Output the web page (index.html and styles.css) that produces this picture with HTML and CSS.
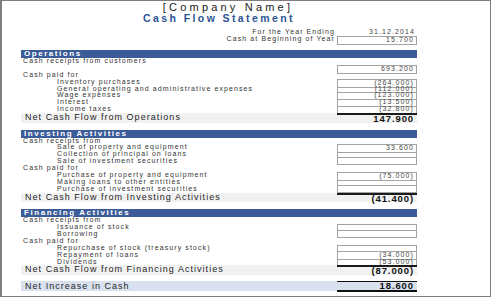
FILE: index.html
```html
<!DOCTYPE html>
<html>
<head>
<meta charset="utf-8">
<link rel="stylesheet" href="styles.css">
</head>
<body>
<div class="frame">
  <div class="sheet">
    <div class="company">[Company Name]</div>
    <div class="title">Cash Flow Statement</div>

    <div class="meta">
      <div class="row"><div class="label right">For the Year Ending</div><div class="val">31.12.2014</div></div>
      <div class="row"><div class="label right">Cash at Beginning of Year</div><div class="val box top">15.700</div></div>
    </div>

    <section class="section">
      <div class="bar">Operations</div>
      <div class="row"><div class="label">Cash receipts from customers</div><div class="val"></div></div>
      <div class="row"><div class="label"></div><div class="val box top">693.200</div></div>
      <div class="row"><div class="label">Cash paid for</div><div class="val"></div></div>
      <div class="row"><div class="label ind">Inventory purchases</div><div class="val box top">(264.000)</div></div>
      <div class="row"><div class="label ind">General operating and administrative expenses</div><div class="val box">(112.000)</div></div>
      <div class="row"><div class="label ind">Wage expenses</div><div class="val box">(123.000)</div></div>
      <div class="row"><div class="label ind">Interest</div><div class="val box">(13.500)</div></div>
      <div class="row"><div class="label ind">Income taxes</div><div class="val box">(32.800)</div></div>
      <div class="net"><div class="net-label">Net Cash Flow from Operations</div><div class="net-val">147.900</div></div>
    </section>

    <section class="section">
      <div class="bar">Investing Activities</div>
      <div class="row"><div class="label">Cash receipts from</div><div class="val"></div></div>
      <div class="row"><div class="label ind">Sale of property and equipment</div><div class="val box top">33.600</div></div>
      <div class="row"><div class="label ind">Collection of principal on loans</div><div class="val box"></div></div>
      <div class="row"><div class="label ind">Sale of investment securities</div><div class="val box"></div></div>
      <div class="row"><div class="label">Cash paid for</div><div class="val"></div></div>
      <div class="row"><div class="label ind">Purchase of property and equipment</div><div class="val box top">(75.000)</div></div>
      <div class="row"><div class="label ind">Making loans to other entities</div><div class="val box"></div></div>
      <div class="row"><div class="label ind">Purchase of investment securities</div><div class="val box"></div></div>
      <div class="net"><div class="net-label">Net Cash Flow from Investing Activities</div><div class="net-val">(41.400)</div></div>
    </section>

    <section class="section">
      <div class="bar">Financing Activities</div>
      <div class="row"><div class="label">Cash receipts from</div><div class="val"></div></div>
      <div class="row"><div class="label ind">Issuance of stock</div><div class="val box top"></div></div>
      <div class="row"><div class="label ind">Borrowing</div><div class="val box"></div></div>
      <div class="row"><div class="label">Cash paid for</div><div class="val"></div></div>
      <div class="row"><div class="label ind">Repurchase of stock (treasury stock)</div><div class="val box top"></div></div>
      <div class="row"><div class="label ind">Repayment of loans</div><div class="val box">(34.000)</div></div>
      <div class="row"><div class="label ind">Dividends</div><div class="val box">(53.000)</div></div>
      <div class="net"><div class="net-label">Net Cash Flow from Financing Activities</div><div class="net-val">(87.000)</div></div>
    </section>

    <div class="net total"><div class="net-label">Net Increase in Cash</div><div class="net-val">18.600</div></div>
  </div>
</div>
</body>
</html>
```

FILE: styles.css
```css
* { box-sizing: border-box; }

html, body {
  margin: 0;
  padding: 0;
  background: #ffffff;
}

body {
  font-family: "Liberation Sans", Arial, sans-serif;
  color: #333333;
}

.frame {
  width: 491px;
  height: 297px;
  border: 1px solid #7f7f7f;
  border-left-width: 2px;
  padding-left: 19px;
  overflow: hidden;
}

.sheet {
  width: 396px;
}

.company {
  margin-top: 1px;
  font-size: 11px;
  line-height: 11px;
  letter-spacing: 3.2px;
  text-align: center;
  padding-left: 18px;
  color: #1a1a1a;
  white-space: nowrap;
}

.title {
  font-size: 10.5px;
  line-height: 10px;
  font-weight: bold;
  letter-spacing: 2.4px;
  text-align: center;
  color: #2d5393;
  white-space: nowrap;
}

.meta {
  margin-top: 6px;
}

.section {
  margin-top: 7.2px;
}

.section + .section {
  margin-top: 7px;
}

.row {
  display: grid;
  grid-template-columns: 1fr 80px;
  height: 6.9px;
  font-size: 7px;
  line-height: 6.9px;
  letter-spacing: 1.1px;
  white-space: nowrap;
}

.label {
  padding-left: 2px;
}

.label.ind {
  padding-left: 36px;
}

.label.right {
  text-align: right;
  padding-right: 2px;
}

.val {
  text-align: right;
  padding-right: 2px;
  color: #444;
}

.box {
  border-left: 1px solid #a3a3a3;
  border-right: 1px solid #a3a3a3;
  border-bottom: 1px solid #a3a3a3;
}

.box.top {
  border-top: 1px solid #a3a3a3;
}

.bar {
  height: 8px;
  line-height: 8.5px;
  background: #3b5c98;
  color: #ffffff;
  font-size: 8px;
  font-weight: bold;
  letter-spacing: 1.55px;
  padding-left: 3px;
  white-space: nowrap;
}

.net {
  display: grid;
  grid-template-columns: 1fr 80px;
  height: 9.5px;
  background: #f1f1f1;
  white-space: nowrap;
}

.net-label {
  font-size: 9px;
  line-height: 9.5px;
  letter-spacing: 1.03px;
  padding-left: 4px;
  color: #1f1f1f;
}

.net-val {
  border-top: 2px solid #1a1a1a;
  font-size: 9.5px;
  line-height: 8px;
  font-weight: bold;
  letter-spacing: 0.9px;
  text-align: right;
  padding-right: 3px;
  color: #111;
}

.total {
  margin-top: 6.5px;
  height: 10px;
  background: #d9e1ee;
}

.total .net-label {
  line-height: 10px;
}

.total .net-val {
  border-top: 1px solid #111;
  border-bottom: 2px solid #111;
  line-height: 8px;
  height: 11px;
}
```
